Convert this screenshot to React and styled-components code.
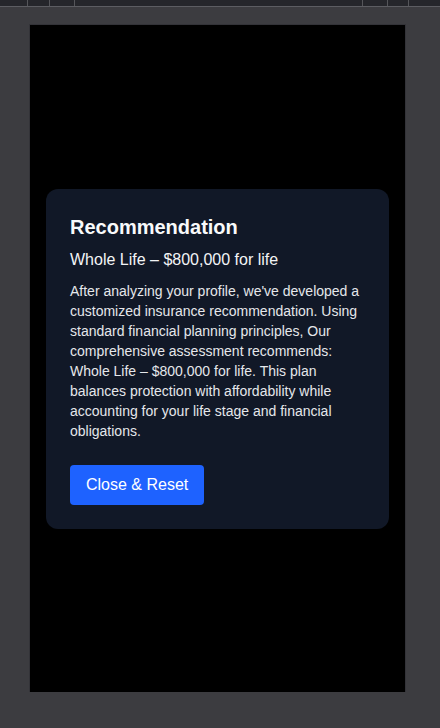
import styled, { createGlobalStyle } from "styled-components";

const GlobalStyle = createGlobalStyle`
  body {
    margin: 0;
    background: #3c3c40;
    font-family: "Liberation Sans", Arial, sans-serif;
  }
`;

const TopBar = styled.div`
  height: 6px;
  background: #25262b;
  border-bottom: 1px solid #5c5d62;
  display: flex;
`;

const BarCell = styled.div`
  box-sizing: border-box;
  width: ${(p) => p.w}px;
  height: 100%;
  border-right: 1px solid #55565a;
  flex-shrink: 0;
`;

const Frame = styled.div`
  width: 375px;
  height: 667px;
  margin: 18px 0 0 30px;
  background: #000;
  display: flex;
  align-items: center;
  justify-content: center;
  box-shadow: 0 0 0 1px #333338;
`;

const Card = styled.div`
  width: 343px;
  box-sizing: border-box;
  padding: 24px;
  background: #111827;
  border-radius: 12px;
  color: #f3f4f6;
`;

const Title = styled.h2`
  margin: 0;
  font-size: 20px;
  line-height: 28px;
  font-weight: 700;
  color: #f9fafb;
`;

const Subtitle = styled.p`
  margin: 7px 0 9px;
  font-size: 16px;
  line-height: 24px;
  color: #f3f4f6;
`;

const Body = styled.p`
  margin: 0 0 24px;
  font-size: 14px;
  line-height: 20px;
  color: #e5e7eb;
`;

const Button = styled.button`
  height: 40px;
  padding: 0 16px;
  border: none;
  border-radius: 4px;
  background: #1e62ff;
  color: #fff;
  font-family: inherit;
  font-size: 16px;
  cursor: pointer;
`;

// widths of the toolbar strip cells, each ending in a divider
const cells = [28, 22, 25, 288, 25, 21];

export default function App() {
  return (
    <>
      <GlobalStyle />
      <TopBar>
        {cells.map((w, i) => (
          <BarCell key={i} w={w} />
        ))}
      </TopBar>
      <Frame>
        <Card>
          <Title>Recommendation</Title>
          <Subtitle>Whole Life – $800,000 for life</Subtitle>
          <Body>
            After analyzing your profile, we've developed a customized insurance
            recommendation. Using standard financial planning principles, Our
            comprehensive assessment recommends: Whole Life – $800,000 for life.
            This plan balances protection with affordability while accounting for
            your life stage and financial obligations.
          </Body>
          <Button>Close &amp; Reset</Button>
        </Card>
      </Frame>
    </>
  );
}
